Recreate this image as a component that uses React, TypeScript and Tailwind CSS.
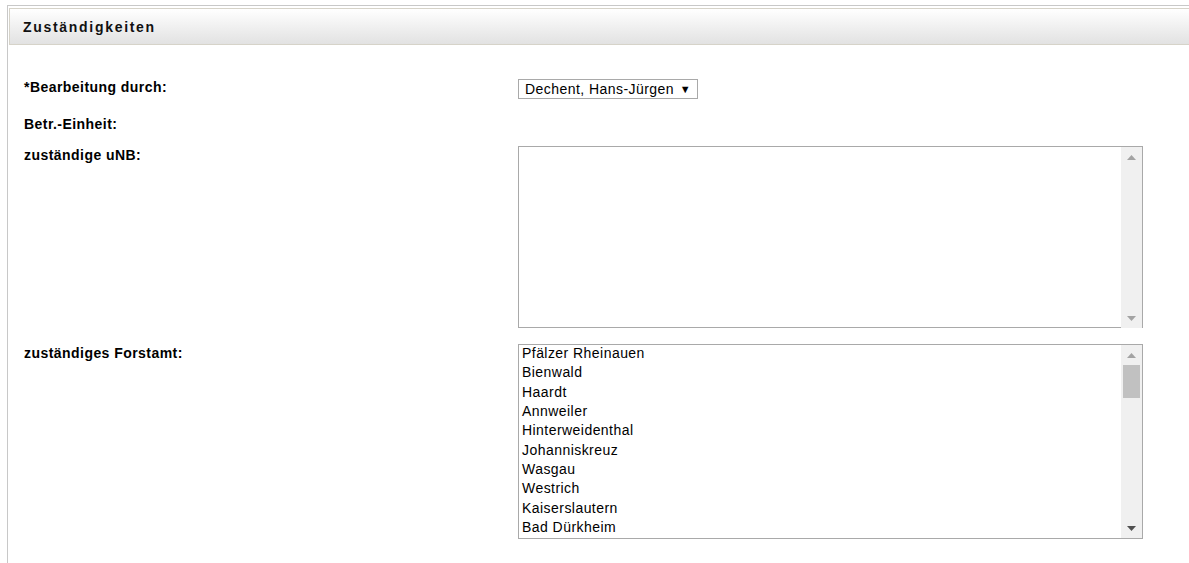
import React from "react";

const forstaemter = [
  "Pfälzer Rheinauen",
  "Bienwald",
  "Haardt",
  "Annweiler",
  "Hinterweidenthal",
  "Johanniskreuz",
  "Wasgau",
  "Westrich",
  "Kaiserslautern",
  "Bad Dürkheim",
];

function Arrow({ dir, color }: { dir: "up" | "down"; color: string }) {
  return (
    <svg width="9" height="5" viewBox="0 0 9 5" className="block">
      {dir === "up" ? (
        <polygon points="0,5 4.5,0 9,5" fill={color} />
      ) : (
        <polygon points="0,0 9,0 4.5,5" fill={color} />
      )}
    </svg>
  );
}

function Scrollbar({ thumb, downDark }: { thumb?: boolean; downDark?: boolean }) {
  return (
    <div className="w-[21px] shrink-0 bg-[#f0f0f0] flex flex-col items-center">
      <div className="h-[20px] flex items-center justify-center w-full">
        <Arrow dir="up" color="#a3a3a3" />
      </div>
      <div className="flex-1 w-full px-[2px]">
        {thumb && <div className="h-[33px] w-full bg-[#c1c1c1]" />}
      </div>
      <div className="h-[20px] flex items-center justify-center w-full">
        <Arrow dir="down" color={downDark ? "#505050" : "#a3a3a3"} />
      </div>
    </div>
  );
}

export default function App() {
  const font = { fontFamily: '"Liberation Sans", Arial, sans-serif' };
  return (
    <div className="w-[1189px] h-[563px] bg-white overflow-hidden" style={font}>
      <div className="ml-[7px] mt-[5px] h-[600px] border-l border-t border-[#c8c8c8]">
        {/* Section header */}
        <div className="pt-[2px] pl-[1px]">
          <div className="h-[37px] border border-r-0 border-[#d6d3c9] bg-gradient-to-b from-white to-[#e2e2e2] pl-[13px] pt-[1px] flex items-center">
            <h2 className="text-[14px] font-bold tracking-[1.7px] text-[#111]">Zuständigkeiten</h2>
          </div>
        </div>

        {/* Form */}
        <div className="pl-[16px] text-black">
          <div className="flex mt-[34px]">
            <div className="w-[494px] pt-[1px] text-[14px] font-bold tracking-[0.45px] leading-[15px]">*Bearbeitung durch:</div>
            <div className="h-[20px] w-[180px] border border-[#a9a9a9] flex items-center pl-[6px] pr-[6px] text-[14px] tracking-[0.45px]">
              <span className="flex-1">Dechent, Hans-Jürgen</span>
              <span className="text-[11px]">▼</span>
            </div>
          </div>

          <div className="mt-[18px] text-[14px] font-bold tracking-[0.45px] leading-[15px]">Betr.-Einheit:</div>

          <div className="flex mt-[14px]">
            <div className="w-[494px] pt-[2px] text-[14px] font-bold tracking-[0.45px] leading-[15px]">zuständige uNB:</div>
            <div className="w-[625px] h-[182px] border border-b-0 border-[#a9a9a9] flex">
              <div className="flex-1 border-b border-[#a9a9a9]" />
              <Scrollbar />
            </div>
          </div>

          <div className="flex mt-[16px]">
            <div className="w-[494px] pt-[2px] text-[14px] font-bold tracking-[0.45px] leading-[15px]">zuständiges Forstamt:</div>
            <div className="w-[625px] h-[195px] border border-[#a9a9a9] flex">
              <div className="flex-1 overflow-hidden">
                <ul className="-mt-[1px] text-[14px] tracking-[0.45px] leading-[19.33px]">
                  {forstaemter.map((f) => (
                    <li key={f} className="pl-[3px]">
                      {f}
                    </li>
                  ))}
                </ul>
              </div>
              <Scrollbar thumb downDark />
            </div>
          </div>
        </div>
      </div>
    </div>
  );
}
